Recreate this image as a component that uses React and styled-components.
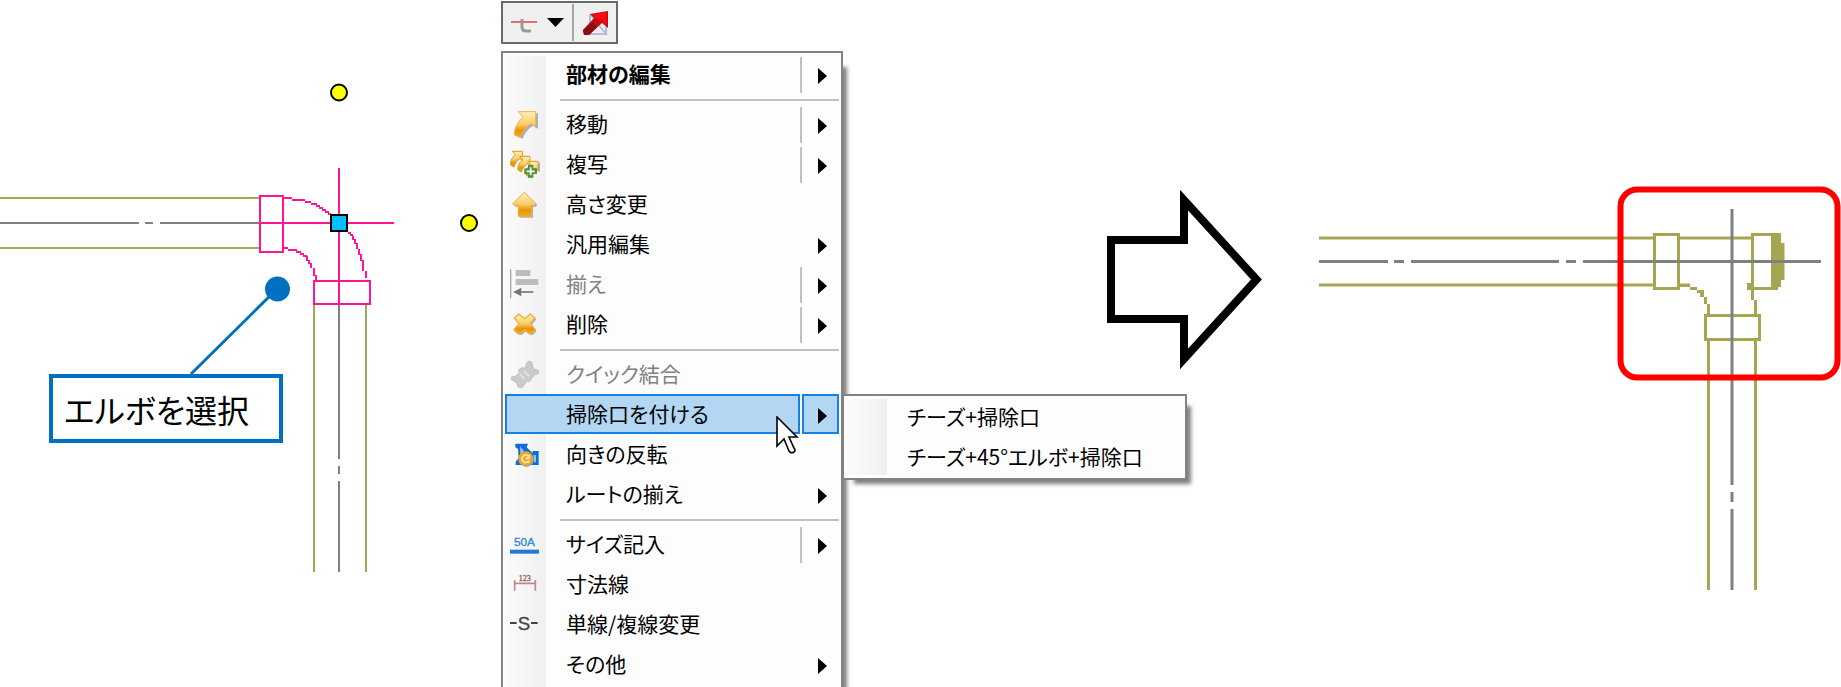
import styled, { createGlobalStyle, css } from "styled-components";

const olive = "#a5a552";
const gray = "#808080";
const pink = "#ff1493";
const blue = "#0070c0";

const menuItems = [
    { label: "部材の編集", bold: true, split: true, arrow: true },
    { separator: true },
    { label: "移動", icon: <MoveIcon />, split: true, arrow: true },
    { label: "複写", icon: <CopyIcon />, split: true, arrow: true },
    { label: "高さ変更", icon: <HeightIcon /> },
    { label: "汎用編集", arrow: true },
    { label: "揃え", icon: <AlignIcon />, disabled: true, split: true, arrow: true },
    { label: "削除", icon: <DeleteIcon />, split: true, arrow: true },
    { separator: true },
    { label: "クイック結合", icon: <JoinIcon />, disabled: true },
    {
        label: "掃除口を付ける",
        split: true,
        arrow: true,
        submenu: ["チーズ+掃除口", "チーズ+45°エルボ+掃除口"],
    },
    { label: "向きの反転", icon: <FlipIcon /> },
    { label: "ルートの揃え", arrow: true },
    { separator: true },
    { label: "サイズ記入", icon: <SizeIcon />, split: true, arrow: true },
    { label: "寸法線", icon: <DimensionIcon /> },
    { label: "単線/複線変更", icon: <LineIcon /> },
    { label: "その他", arrow: true },
];

export default function App() {
    return (
        <Page>
            <GlobalStyle />
            <BeforeFigure>
                <ElbowDrawing />
                <Callout>エルボを選択</Callout>
            </BeforeFigure>
            <MenuColumn>
                <Toolbar>
                    <ToolButton type="button" aria-label="配管">
                        <PipeIcon />
                        <TriangleDown />
                    </ToolButton>
                    <ToolDivider />
                    <ToolButton type="button" aria-label="移動先">
                        <RedArrowIcon />
                    </ToolButton>
                </Toolbar>
                <ContextMenu items={menuItems} />
            </MenuColumn>
            <ArrowArea>
                <BigArrow />
            </ArrowArea>
            <AfterFigure>
                <TeeDrawing />
            </AfterFigure>
        </Page>
    );
}

function ContextMenu({ items }) {
    return (
        <Menu>
            {items.map((item, index) =>
                item.separator ? (
                    <Separator key={index} />
                ) : (
                    <Row key={index}>
                        <ItemButton type="button" disabled={item.disabled} $active={!!item.submenu}>
                            <IconSlot>{item.icon}</IconSlot>
                            <Label $bold={item.bold}>{item.label}</Label>
                        </ItemButton>
                        <RowDivider $visible={item.split && !item.submenu} />
                        {item.arrow && (
                            <ArrowButton type="button" aria-label={item.label + " サブメニュー"} $active={!!item.submenu}>
                                <TriangleRight />
                            </ArrowButton>
                        )}
                        {item.submenu && <SubMenu items={item.submenu} />}
                        {item.submenu && <Pointer />}
                    </Row>
                )
            )}
        </Menu>
    );
}

function SubMenu({ items }) {
    return (
        <SubMenuBox>
            {items.map((label) => (
                <Row key={label}>
                    <ItemButton type="button">
                        <IconSlot />
                        <Label>{label}</Label>
                    </ItemButton>
                </Row>
            ))}
        </SubMenuBox>
    );
}

function ElbowDrawing() {
    return (
        <svg width="501" height="600" viewBox="0 0 501 600" fill="none" strokeWidth="2">
            <g stroke={olive}>
                <path d="M0 198H260M0 248H260M314 303V572M366 303V572" />
            </g>
            <g stroke={gray}>
                <path d="M0 223H139M145 223H153M160 223H260M339 304V459M339 466V474M339 481V572" />
            </g>
            <g stroke={pink}>
                <rect x="260" y="196" width="23" height="56" />
                <rect x="314" y="281" width="56" height="23" />
                <path d="M260 223H394M339 168V304" />
                <path d="M284 198H292M292 200H305M305 202H311M311 204H317M316 206H320M319 208H323M322 210H326M325 212H329M328 214H331" />
                <path d="M348 233H351M350 235H353M353 236V240M355 239V244M357 243V249M359 249V255M361 254V261M363 260V271M366 271V278" />
                <path d="M284 248H288M288 250H297M296 252H301M300 254H304M303 256H307M307 256V261M309 260V264M311 263V268M314 268V276M316 275V281" />
            </g>
            <g fill="#ffff00" stroke="#000">
                <circle cx="339" cy="92.5" r="8" />
                <circle cx="469" cy="223" r="8" />
            </g>
            <rect x="331" y="215" width="16" height="16" fill="#00bfff" stroke="#000" />
            <circle cx="277.5" cy="289" r="12.5" fill={blue} />
            <path d="M277 289L191 374" stroke={blue} strokeWidth="3" />
        </svg>
    );
}

function TeeDrawing() {
    return (
        <svg width="522" height="600" viewBox="1319 0 522 600" fill="none" strokeWidth="3">
            <g stroke={olive}>
                <path d="M1319 238H1653M1319 285H1653M1680 238H1751M1708.5 341V590M1755.5 341V590" />
                <rect x="1654.5" y="234.5" width="24" height="54" />
                <rect x="1752.5" y="234.5" width="24" height="54" />
                <rect x="1705.5" y="315.5" width="54" height="24" />
            </g>
            <g fill={olive}>
                <path d="M1771 233H1781V243H1784.5V280H1781V287H1778V290H1771Z" />
                <path d="M1747 283H1752V290H1754V300H1757V314H1754V300H1751V290H1747Z" />
                <path d="M1680 283.5H1690V287H1697V290H1704V297H1707V304H1710V314H1707V304H1704V297H1700V293H1697V290H1690V287H1680Z" />
            </g>
            <g stroke={gray}>
                <path d="M1319 261.5H1388M1394 261.5H1404M1411 261.5H1559M1566 261.5H1576M1583 261.5H1821" />
                <path d="M1732 209V485M1732 492V502M1732 509V590" />
            </g>
            <rect x="1620.5" y="189.5" width="217" height="188" rx="17" stroke="#ff0000" strokeWidth="6" />
        </svg>
    );
}

function BigArrow() {
    return (
        <svg width="162" height="190" viewBox="0 0 162 190">
            <path
                d="M7 54H80V14L152.500 93.500L80 173V133H7Z"
                fill="#fff"
                stroke="#000"
                strokeWidth="8"
                strokeMiterlimit="10"
            />
        </svg>
    );
}

function Pointer() {
    return (
        <PointerSvg width="24" height="40" viewBox="0 0 24 40">
            <path
                d="M1 1V30L8 23L13 35Q15 38 18 36Q20 35 18 32L13 21H21Z"
                fill="#fff"
                stroke="#000"
                strokeWidth="1.6"
            />
        </PointerSvg>
    );
}

function TriangleRight() {
    return (
        <svg width="9" height="16" viewBox="0 0 9 16">
            <path d="M0 0L9 8L0 16Z" fill="#000" />
        </svg>
    );
}

function TriangleDown() {
    return (
        <svg width="17" height="9" viewBox="0 0 17 9">
            <path d="M0 0H17L8.500 9Z" fill="#000" />
        </svg>
    );
}

function PipeIcon() {
    return (
        <svg width="26" height="26" viewBox="0 0 26 26" fill="none">
            <path d="M0 12H26" stroke="#f06a6a" strokeWidth="2" />
            <path d="M11 9V17Q11 21 15 21H20" stroke="#999" strokeWidth="3" />
        </svg>
    );
}

function RedArrowIcon() {
    return (
        <svg width="27" height="26" viewBox="0 0 27 26">
            <path d="M8 4L24 24H2M8 4V22M24 8V24" fill="none" stroke="#b4bde0" strokeWidth="2" />
            <path d="M1 20L12 8L8 4L26 1V18L20 13L7 25L2 25Z" fill="#c40d14" />
            <path d="M14 8L10 5L25 2L24 15L20 11Z" fill="#fb0d0d" />
            <path d="M1 20L2 25H7L15 17L11 12Z" fill="#8e0b14" />
        </svg>
    );
}

// shared frame for the 30px menu icons, drawn on a 90 unit grid
function Icon({ children }) {
    return (
        <svg width="30" height="30" viewBox="0 0 90 90" fill="none">
            <defs>
                <linearGradient id="gold" x1="0" y1="0" x2="0" y2="1">
                    <stop offset="0" stopColor="#fff0bd" />
                    <stop offset="0.5" stopColor="#fbcb68" />
                    <stop offset="0.75" stopColor="#e59400" />
                    <stop offset="1" stopColor="#f2ad25" />
                </linearGradient>
            </defs>
            {children}
        </svg>
    );
}

function MoveIcon() {
    const d = "M25 8H77V55L64 44C50 52 38 66 31 84L14 78C12 58 24 38 40 24Z";
    return (
        <Icon>
            <path d={d} fill="#a7aec2" transform="translate(7 5)" />
            <path d={d} fill="url(#gold)" stroke="#f0b13c" strokeWidth="3" />
        </Icon>
    );
}

function CopyIcon() {
    const d = "M7 7H38V36L30 29C21 34 16 42 12 54L2 48C0 34 8 24 17 17Z";
    return (
        <Icon>
            <path d={d} fill="#a7aec2" transform="translate(52 34)" />
            <path d={d} fill="url(#gold)" stroke="#dd9a1c" strokeWidth="3" />
            <path d={d} fill="url(#gold)" stroke="#dd9a1c" strokeWidth="3" transform="translate(22 15)" />
            <path d={d} fill="url(#gold)" stroke="#dd9a1c" strokeWidth="3" transform="translate(46 30)" />
            <path d="M54 48H70V58H81V75H70V86H54V75H43V58H54Z" fill="#4f9436" />
            <path d="M62 55V79M50 67H74" stroke="#fff" strokeWidth="5" />
        </Icon>
    );
}

function HeightIcon() {
    const d = "M43 10L78 44L74 49H65V82H25V49H12L8 44Z";
    return (
        <Icon>
            <path d={d} fill="#a7aec2" transform="translate(4 4)" />
            <path d={d} fill="url(#gold)" stroke="#eeb03c" strokeWidth="3" />
        </Icon>
    );
}

function AlignIcon() {
    return (
        <Icon>
            <path d="M2 1V88" stroke="#a8a8a8" strokeWidth="4" />
            <rect x="17" y="3" width="44" height="18" fill="#bcbcbc" />
            <rect x="17" y="30" width="68" height="18" fill="#bcbcbc" />
            <path d="M25 69H70" stroke="#777" strokeWidth="5" />
            <path d="M9 69L34 56V82Z" fill="#777" />
        </Icon>
    );
}

function DeleteIcon() {
    const d =
        "M26 15L44 29L61 15L75 27L61 44L76 62L64 74H58L44 62L31 74H24L12 62L27 44L13 28Z";
    return (
        <Icon>
            <path d={d} fill="#a7aec2" transform="translate(4 4)" />
            <path d={d} fill="url(#gold)" stroke="#edaf38" strokeWidth="4" strokeLinejoin="round" />
        </Icon>
    );
}

function JoinIcon() {
    return (
        <Icon>
            <g fill="#cacaca" stroke="#c0c0c0" strokeWidth="3" strokeLinejoin="round">
                <path d="M50 12L56 6L66 10L68 24L75 32L85 34V44L76 46L66 56L60 66L48 68L44 76L36 86L24 84L22 74L12 66L4 62V54L16 52L28 42L26 32L36 26L46 28Z" />
            </g>
            <path d="M30 46L44 60M42 36L58 52" stroke="#e8e8e8" strokeWidth="5" />
        </Icon>
    );
}

function FlipIcon() {
    return (
        <Icon>
            <path d="M16 14H54L50 25L68 43V36H86V78H17V68L26 57L24 30L16 25Z" fill="#0b70d0" />
            <path d="M30 22L42 36L31 48ZM70 48H78V70H72Z" fill="#8fc0ee" />
            <circle cx="49" cy="62" r="22" fill="#9aa2b8" />
            <circle cx="47" cy="59" r="22" fill="#f0a423" />
            <path d="M57 52A12 11 0 1 0 58 65M58 48L57 58L47 58" stroke="#ffe4a0" strokeWidth="6" />
        </Icon>
    );
}

function SizeIcon() {
    return (
        <Icon>
            <IconText x="43" y="50" textAnchor="middle" fontSize="35" fill="#3486dc" stroke="#3486dc">50A</IconText>
            <rect x="0" y="62" width="87" height="12" fill="#2079d2" />
        </Icon>
    );
}

function DimensionIcon() {
    return (
        <Icon>
            <SerifText x="44" y="35" textAnchor="middle" fontSize="24" fill="#9c5c5c" stroke="#9c5c5c">123</SerifText>
            <path d="M14 33V65M76 33V65M14 43H76" stroke="#b98c8c" strokeWidth="5" />
        </Icon>
    );
}

function LineIcon() {
    return (
        <Icon>
            <path d="M0 42H20M63 42H83" stroke="#444" strokeWidth="6" />
            <IconText x="42" y="63" textAnchor="middle" fontSize="56" fill="#444" stroke="#444">S</IconText>
        </Icon>
    );
}

const GlobalStyle = createGlobalStyle`
    *{
        box-sizing: border-box;
    }

    body{
        margin: 0;
        background-color: #ffffff;
        font-family: 'Noto Sans CJK JP', 'Noto Sans', sans-serif;
        color: #000000;
    }

    svg{
        display: block;
        flex-shrink: 0;
    }

    button{
        margin: 0;
        padding: 0;
        border: none;
        background: none;
        font: inherit;
        color: inherit;
    }
`;

const Page = styled.main`
    display: flex;
    align-items: flex-start;
    height: 100vh;
    overflow: hidden;
`;

const BeforeFigure = styled.section`
    position: relative;
    flex-shrink: 0;
`;

const Callout = styled.p`
    position: absolute;
    left: 49px;
    top: 374px;
    width: 234px;
    height: 69px;
    margin: 0;
    padding: 0 0 0 11px;
    border: 4px solid ${blue};
    background-color: #ffffff;
    display: flex;
    align-items: center;
    font-size: 32px;
    line-height: 40px;
    font-feature-settings: "palt";
    white-space: nowrap;
`;

const MenuColumn = styled.div`
    display: flex;
    flex-direction: column;
    align-items: flex-start;
    gap: 7px;
    padding-top: 1px;
    flex-shrink: 0;
`;

const Toolbar = styled.div`
    height: 43px;
    border: 2px solid #696969;
    background-color: #f0f0f0;
    display: flex;
    align-items: stretch;
    padding: 1px 7px 1px 8px;
`;

const ToolButton = styled.button`
    display: flex;
    align-items: center;
    gap: 10px;
`;

const ToolDivider = styled.span`
    width: 2px;
    margin: 0 8px;
    background-color: #a6a6a6;
`;

const panel = css`
    margin: 0;
    list-style: none;
    border: 2px solid #828282;
    padding: 1px 2px;
    background: linear-gradient(to right, #fcfcfc, #f0f0f0) 0 3px / 43px 100% no-repeat #fdfdfd;
`;

const Menu = styled.ul`
    ${panel}
    width: 342px;
    min-height: 100vh;
    box-shadow: 8px 12px 4px -4px rgba(0, 0, 0, 0.5);
`;

const SubMenuBox = styled.ul`
    ${panel}
    position: absolute;
    left: calc(100% + 3px);
    top: 0;
    width: 345px;
    background-size: 43px calc(100% - 6px);
    box-shadow: 8px 8px 4px -4px rgba(0, 0, 0, 0.5);
`;

const Separator = styled.li`
    height: 2px;
    margin: 5px 0 3px 55px;
    background-color: #c0c0c0;
`;

const Row = styled.li`
    position: relative;
    display: flex;
    height: 40px;
`;

const highlight = css`
    border: 2px solid #1583dd;
    background-color: #b3d6f2;
`;

const ItemButton = styled.button`
    flex: 1;
    display: flex;
    align-items: center;
    gap: 26px;
    border: 2px solid transparent;
    padding-left: 3px;
    text-align: left;
    ${({ $active }) => $active && highlight}

    &:disabled{
        color: #808080;
    }
`;

const IconSlot = styled.span`
    width: 30px;
    height: 30px;
    flex-shrink: 0;
`;

const Label = styled.span`
    padding-bottom: 3px;
    font-size: 21px;
    line-height: 30px;
    font-weight: ${({ $bold }) => ($bold ? 700 : 400)};
    font-feature-settings: "palt";
    white-space: nowrap;
`;

const RowDivider = styled.span`
    width: 2px;
    margin: 3px 0 1px;
    background-color: ${({ $visible }) => ($visible ? "#c0c0c0" : "transparent")};
`;

const ArrowButton = styled.button`
    width: 37px;
    display: flex;
    align-items: center;
    justify-content: center;
    border: 2px solid transparent;
    padding: 3px 0 0 3px;
    ${({ $active }) => $active && highlight}
`;

const PointerSvg = styled.svg`
    position: absolute;
    left: 271px;
    top: 22px;
    z-index: 1;
`;

const ArrowArea = styled.div`
    flex: 1;
    display: flex;
    justify-content: flex-end;
    padding: 186px 53px 0 0;
`;

const AfterFigure = styled.section`
    flex-shrink: 0;
`;

const IconText = styled.text`
    font-family: 'Liberation Sans', sans-serif;
`;

const SerifText = styled.text`
    font-family: 'Liberation Serif', serif;
`;
